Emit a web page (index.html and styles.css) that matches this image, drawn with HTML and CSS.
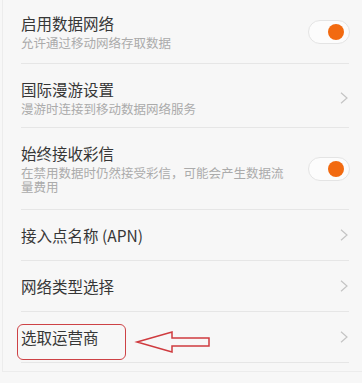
FILE: index.html
```html
<!DOCTYPE html>
<html lang="zh-CN">
<head>
<meta charset="utf-8">
<title>移动网络设置</title>
<link rel="stylesheet" href="styles.css">
</head>
<body>
<div class="frame">
  <div class="list">
    <div class="row row-first">
      <div class="text">
        <div class="title">启用数据网络</div>
        <div class="sub">允许通过移动网络存取数据</div>
      </div>
      <div class="toggle"><span class="knob"></span></div>
    </div>
    <div class="row">
      <div class="text">
        <div class="title">国际漫游设置</div>
        <div class="sub">漫游时连接到移动数据网络服务</div>
      </div>
      <svg class="chev" viewBox="0 0 8 12" width="8" height="12"><path d="M1 0.8 L7 6 L1 11.2" fill="none" stroke="#c4c4c4" stroke-width="1.2"/></svg>
    </div>
    <div class="row row-tall">
      <div class="text narrow">
        <div class="title">始终接收彩信</div>
        <div class="sub">在禁用数据时仍然接受彩信，可能会产生数据流量费用</div>
      </div>
      <div class="toggle"><span class="knob"></span></div>
    </div>
    <div class="row row-single">
      <div class="text">
        <div class="title">接入点名称 (APN)</div>
      </div>
      <svg class="chev" viewBox="0 0 8 12" width="8" height="12"><path d="M1 0.8 L7 6 L1 11.2" fill="none" stroke="#c4c4c4" stroke-width="1.2"/></svg>
    </div>
    <div class="row row-single">
      <div class="text">
        <div class="title">网络类型选择</div>
      </div>
      <svg class="chev" viewBox="0 0 8 12" width="8" height="12"><path d="M1 0.8 L7 6 L1 11.2" fill="none" stroke="#c4c4c4" stroke-width="1.2"/></svg>
    </div>
    <div class="row row-single">
      <div class="text">
        <div class="title">选取运营商</div>
      </div>
      <svg class="chev" viewBox="0 0 8 12" width="8" height="12"><path d="M1 0.8 L7 6 L1 11.2" fill="none" stroke="#c4c4c4" stroke-width="1.2"/></svg>
    </div>
  </div>
  <div class="mark-box"></div>
  <svg class="mark-arrow" viewBox="0 0 80 26" width="80" height="26"><polygon points="3,13 38,3 38,9 75,9 75,17 38,17 38,23" fill="none" stroke="#cf3b3f" stroke-width="1.5" stroke-linejoin="miter"/></svg>
</div>
</body>
</html>
```
FILE: styles.css
```css
html, body {
  margin: 0;
  padding: 0;
  background: #f7f7f7;
}
body {
  width: 362px;
  height: 383px;
  overflow: hidden;
  font-family: "Noto Sans CJK SC", "Noto Sans", sans-serif;
}
.frame {
  position: relative;
  margin-left: 2px;
  border-left: 1px solid #ececec;
  border-bottom: 1px solid #ececec;
  height: 372px;
  box-sizing: border-box;
}
.list {
  display: flex;
  flex-direction: column;
}
.row {
  display: flex;
  align-items: center;
  margin: 0 13px 0 18px;
  padding: 15px 1px 11px 0;
  border-bottom: 1px solid #e6e6e6;
}
.row-first {
  padding-top: 13px;
  padding-bottom: 13px;
}
.row-tall {
  padding-bottom: 15px;
}
.row-single {
  height: 51px;
  padding-top: 0;
  padding-bottom: 0;
  box-sizing: border-box;
}
.text {
  flex: 1;
  min-width: 0;
}
.text.narrow {
  padding-right: 14px;
}
.title {
  font-size: 15.5px;
  line-height: 20px;
  color: #363636;
}
.sub {
  margin-top: 3px;
  font-size: 12.5px;
  line-height: 14px;
  color: #ababab;
}
.toggle {
  flex: none;
  width: 42px;
  height: 24px;
  box-sizing: border-box;
  border: 1px solid #e4e4e4;
  border-radius: 12px;
  background: #fcfcfc;
  display: flex;
  align-items: center;
  justify-content: flex-end;
  padding-right: 5px;
  margin-right: -2px;
}
.knob {
  width: 16px;
  height: 16px;
  border-radius: 50%;
  background: #f26a10;
}
.chev {
  flex: none;
  display: block;
}
.mark-box {
  position: absolute;
  left: 14px;
  top: 324px;
  width: 109px;
  height: 36px;
  box-sizing: border-box;
  border: 1.5px solid #cd4246;
  border-radius: 6px;
}
.mark-arrow {
  position: absolute;
  left: 131px;
  top: 329px;
  display: block;
}
```
